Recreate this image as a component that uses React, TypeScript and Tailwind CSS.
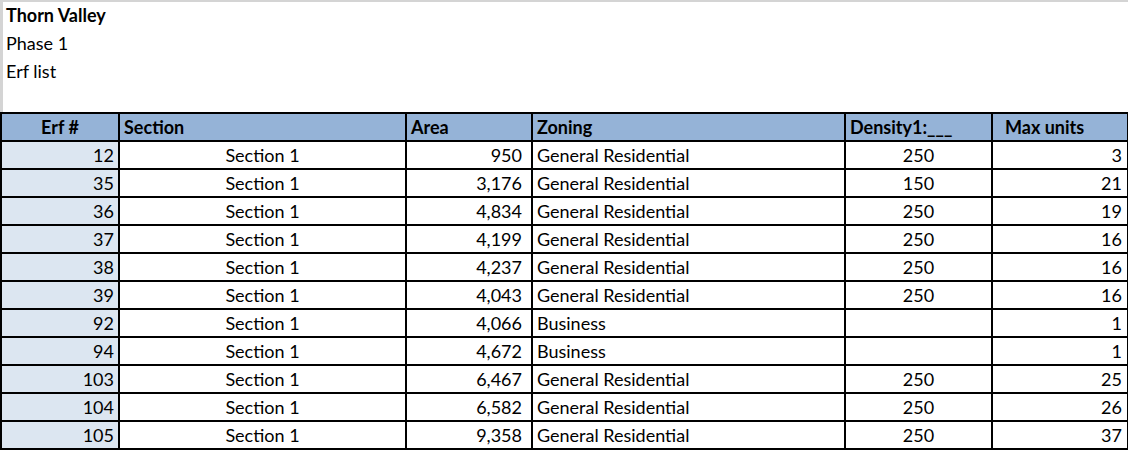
const rows = [
  { erf: 12, area: '950', zoning: 'General Residential', density: '250', units: 3 },
  { erf: 35, area: '3,176', zoning: 'General Residential', density: '150', units: 21 },
  { erf: 36, area: '4,834', zoning: 'General Residential', density: '250', units: 19 },
  { erf: 37, area: '4,199', zoning: 'General Residential', density: '250', units: 16 },
  { erf: 38, area: '4,237', zoning: 'General Residential', density: '250', units: 16 },
  { erf: 39, area: '4,043', zoning: 'General Residential', density: '250', units: 16 },
  { erf: 92, area: '4,066', zoning: 'Business', density: '', units: 1 },
  { erf: 94, area: '4,672', zoning: 'Business', density: '', units: 1 },
  { erf: 103, area: '6,467', zoning: 'General Residential', density: '250', units: 25 },
  { erf: 104, area: '6,582', zoning: 'General Residential', density: '250', units: 26 },
  { erf: 105, area: '9,358', zoning: 'General Residential', density: '250', units: 37 },
]

const cell = 'h-[28px] border-2 border-black px-1 align-bottom pb-[2px] leading-[22px] whitespace-nowrap'

export default function App() {
  return (
    <div
      className="h-[450px] w-[1128px] overflow-hidden bg-white text-[18px] text-black"
      style={{ fontFamily: 'Lato, "Liberation Sans", sans-serif' }}
    >
      {/* Titel */}
      <div className="h-[112px] border-l-[3px] border-t-2 border-[#d4d4d4] pl-[3px]">
        <div className="flex h-[24px] items-end font-bold leading-[22px]">Thorn Valley</div>
        <div className="flex h-[28px] items-end leading-[22px]">Phase 1</div>
        <div className="flex h-[28px] items-end leading-[22px]">Erf list</div>
      </div>

      {/* Tabel */}
      <table className="w-[1127px] table-fixed border-collapse">
        <colgroup>
          <col className="w-[118px]" />
          <col className="w-[287px]" />
          <col className="w-[126px]" />
          <col className="w-[313px]" />
          <col className="w-[147px]" />
          <col className="w-[136px]" />
        </colgroup>
        <thead>
          <tr className="bg-[#95b3d7] font-bold">
            <th className={`${cell} text-center`}>Erf #</th>
            <th className={`${cell} text-left`}>Section</th>
            <th className={`${cell} text-left`}>Area</th>
            <th className={`${cell} text-left`}>Zoning</th>
            <th className={`${cell} text-left`}>Density1:___</th>
            <th className={`${cell} pl-3 text-left`}>Max units</th>
          </tr>
        </thead>
        <tbody>
          {rows.map((r) => (
            <tr key={r.erf}>
              <td className={`${cell} bg-[#dce6f1] text-right`}>{r.erf}</td>
              <td className={`${cell} text-center`}>Section 1</td>
              <td className={`${cell} pr-[9px] text-right`}>{r.area}</td>
              <td className={`${cell}`}>{r.zoning}</td>
              <td className={`${cell} text-center`}>{r.density}</td>
              <td className={`${cell} pr-[5px] text-right`}>{r.units}</td>
            </tr>
          ))}
        </tbody>
      </table>
    </div>
  )
}
